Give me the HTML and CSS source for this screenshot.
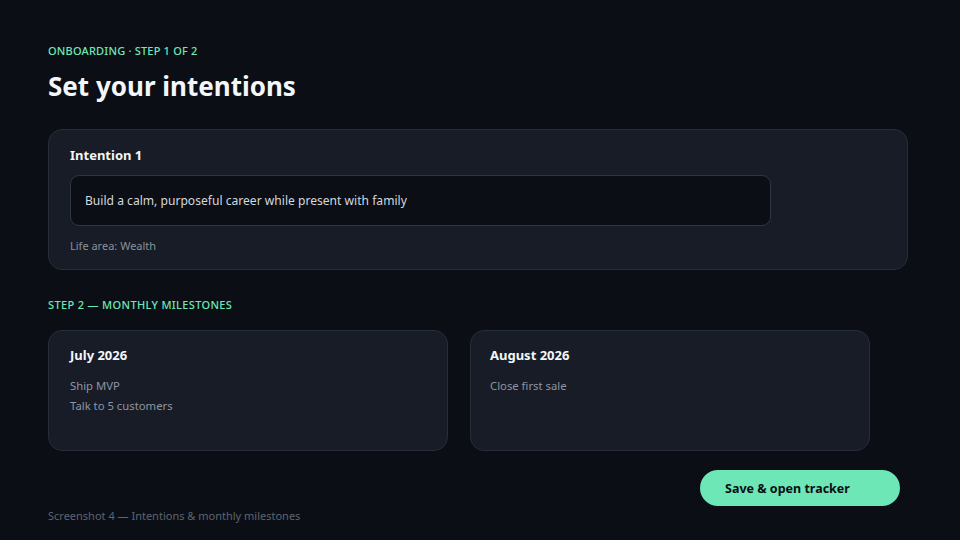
FILE: index.html
```html
<!DOCTYPE html>
<html>
<head>
<meta charset="utf-8">
<link rel="stylesheet" href="styles.css">
</head>
<body>
<main class="page">
  <div class="eyebrow">Onboarding · Step 1 of 2</div>
  <h1 class="title">Set your intentions</h1>

  <section class="card intention">
    <div class="card-title">Intention 1</div>
    <div class="input">Build a calm, purposeful career while present with family</div>
    <div class="meta">Life area: Wealth</div>
  </section>

  <div class="eyebrow step2">Step 2 — Monthly milestones</div>

  <div class="milestones">
    <section class="card month">
      <div class="card-title">July 2026</div>
      <ul class="items">
        <li>Ship MVP</li>
        <li>Talk to 5 customers</li>
      </ul>
    </section>
    <section class="card month second">
      <div class="card-title">August 2026</div>
      <ul class="items">
        <li>Close first sale</li>
      </ul>
    </section>
  </div>

  <div class="actions">
    <button class="primary">Save &amp; open tracker</button>
  </div>

  <footer class="caption">Screenshot 4 — Intentions &amp; monthly milestones</footer>
</main>
</body>
</html>
```

FILE: styles.css
```css
* { box-sizing: border-box; }
html, body {
  margin: 0;
  padding: 0;
  background: #0b0e14;
  width: 960px;
  height: 540px;
  overflow: hidden;
}
body {
  font-family: "Noto Sans", "Open Sans", "Liberation Sans", sans-serif;
  color: #e8ebf0;
}
.page {
  padding: 43px 52px 0 48px;
}
.eyebrow {
  font-size: 11px;
  line-height: 16px;
  font-weight: 500;
  letter-spacing: 0.2px;
  text-transform: uppercase;
  color: #6ee7b7;
}
.title {
  margin: 9px 0 0 0;
  font-size: 26px;
  line-height: 36px;
  font-weight: 700;
  color: #f4f6f9;
}
.card {
  background: #171c26;
  border: 1px solid #272e3a;
  border-radius: 14px;
}
.intention {
  margin-top: 25px;
  height: 141px;
  padding: 16px 21px 0 21px;
}
.card-title {
  font-size: 13px;
  line-height: 18px;
  font-weight: 700;
  color: #f4f6f9;
}
.input {
  margin-top: 11px;
  width: 701px;
  height: 51px;
  background: #0b0e14;
  border: 1px solid #2f3643;
  border-radius: 9px;
  padding: 0 14px;
  display: flex;
  align-items: center;
  font-size: 12.1px;
  color: #d4d8df;
}
.meta {
  margin-top: 12px;
  font-size: 11px;
  line-height: 16px;
  color: #8a919d;
}
.step2 {
  margin-top: 27px;
  letter-spacing: 0.35px;
}
.milestones {
  margin-top: 17px;
  display: flex;
  gap: 22px;
}
.month {
  width: 400px;
  height: 121px;
  padding: 15px 21px 0 21px;
}
.month.second {
  padding-left: 19px;
}
.items {
  list-style: none;
  margin: 12px 0 0 0;
  padding: 0;
  font-size: 11.3px;
  line-height: 20px;
  color: #8e95a1;
}
.actions {
  margin-top: 19px;
  padding-right: 8px;
  display: flex;
  justify-content: flex-end;
}
.primary {
  width: 200px;
  height: 36px;
  border: none;
  border-radius: 18px;
  background: #6ee7b7;
  color: #0b0e14;
  font-family: inherit;
  font-size: 12.5px;
  font-weight: 700;
  text-align: left;
  padding: 0 0 0 25px;
}
.caption {
  margin-top: 2px;
  font-size: 11px;
  line-height: 16px;
  color: #5d6471;
}
```
